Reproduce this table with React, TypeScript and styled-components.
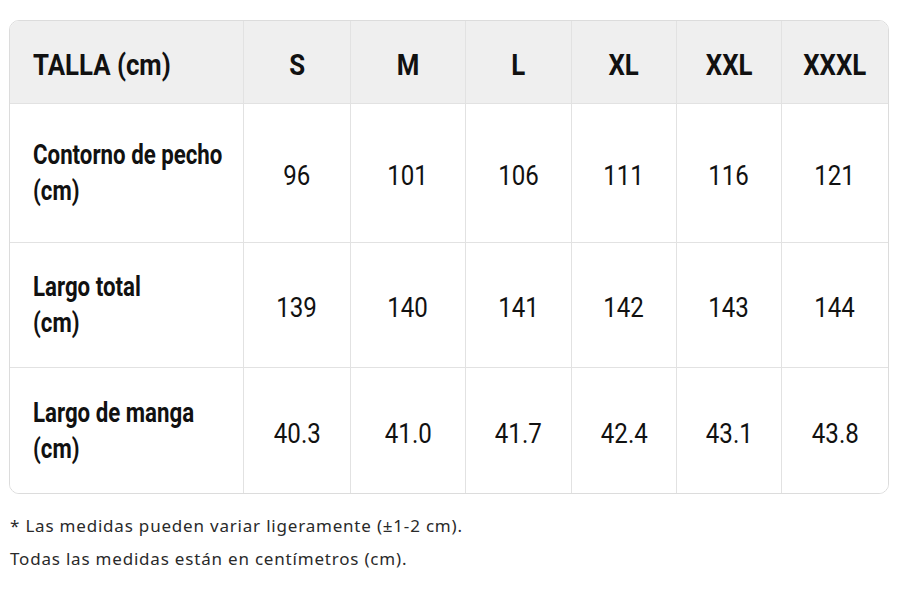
import React from 'react'
import styled, { createGlobalStyle } from 'styled-components'

const Global = createGlobalStyle`
  html, body {
    margin: 0;
    padding: 0;
    background: #ffffff;
  }
`

const Page = styled.div`
  padding: 20px 11px 0 9px;
`

const Table = styled.div`
  display: grid;
  grid-template-columns: 234px 107px 115px 106px 105px 105px 1fr;
  grid-template-rows: 83px 139px 125px 125px;
  width: 880px;
  box-sizing: border-box;
  border: 1px solid #dcdcdc;
  border-radius: 10px;
  overflow: hidden;
`

const Cell = styled.div<{ $head?: boolean; $first?: boolean; $lastCol?: boolean; $lastRow?: boolean }>`
  display: flex;
  align-items: center;
  justify-content: ${(p) => (p.$first ? 'flex-start' : 'center')};
  padding-left: ${(p) => (p.$first ? '23px' : '0')};
  background: ${(p) => (p.$head ? '#efefef' : '#ffffff')};
  border-right: ${(p) => (p.$lastCol ? 'none' : '1px solid #e2e2e2')};
  border-bottom: ${(p) => (p.$lastRow ? 'none' : '1px solid #e2e2e2')};
  font-family: Roboto, 'Liberation Sans', sans-serif;
  color: #111111;
  overflow: hidden;
`

const Narrow = styled.span<{ $bold?: boolean; $left?: boolean; $scale: number; $size: number }>`
  display: inline-block;
  white-space: nowrap;
  font-size: ${(p) => p.$size}px;
  line-height: 36px;
  font-weight: ${(p) => (p.$bold ? 700 : 400)};
  transform: scaleX(${(p) => p.$scale});
  transform-origin: ${(p) => (p.$left ? 'left center' : 'center')};
`

const HeadText = styled(Narrow)`
  padding-top: 5px;
`

const Value = styled(Narrow)`
  padding-top: 6px;
`

const Notes = styled.div`
  margin-top: 15px;
  padding-left: 1px;
  font-family: 'Noto Sans', 'Open Sans', sans-serif;
  font-size: 17px;
  letter-spacing: 0.8px;
  line-height: 33px;
  color: #2a2a2a;
`

const sizes = ['S', 'M', 'L', 'XL', 'XXL', 'XXXL']

const rows: { label: string[]; values: string[] }[] = [
  { label: ['Contorno de pecho', '(cm)'], values: ['96', '101', '106', '111', '116', '121'] },
  { label: ['Largo total', '(cm)'], values: ['139', '140', '141', '142', '143', '144'] },
  { label: ['Largo de manga', '(cm)'], values: ['40.3', '41.0', '41.7', '42.4', '43.1', '43.8'] },
]

export default function App() {
  return (
    <Page>
      <Global />
      <Table>
        <Cell $head $first>
          <HeadText $bold $left $size={30} $scale={0.86}>TALLA (cm)</HeadText>
        </Cell>
        {sizes.map((s, i) => (
          <Cell key={s} $head $lastCol={i === sizes.length - 1}>
            <HeadText $bold $size={30} $scale={0.86}>{s}</HeadText>
          </Cell>
        ))}
        {rows.map((r, ri) => (
          <React.Fragment key={r.label[0]}>
            <Cell $first $lastRow={ri === rows.length - 1}>
              <Narrow $bold $left $size={28} $scale={0.795}>
                {r.label[0]}
                <br />
                {r.label[1]}
              </Narrow>
            </Cell>
            {r.values.map((v, i) => (
              <Cell key={i} $lastCol={i === r.values.length - 1} $lastRow={ri === rows.length - 1}>
                <Value $size={28} $scale={0.86}>{v}</Value>
              </Cell>
            ))}
          </React.Fragment>
        ))}
      </Table>
      <Notes>
        <div>* Las medidas pueden variar ligeramente (±1-2 cm).</div>
        <div>Todas las medidas están en centímetros (cm).</div>
      </Notes>
    </Page>
  )
}
